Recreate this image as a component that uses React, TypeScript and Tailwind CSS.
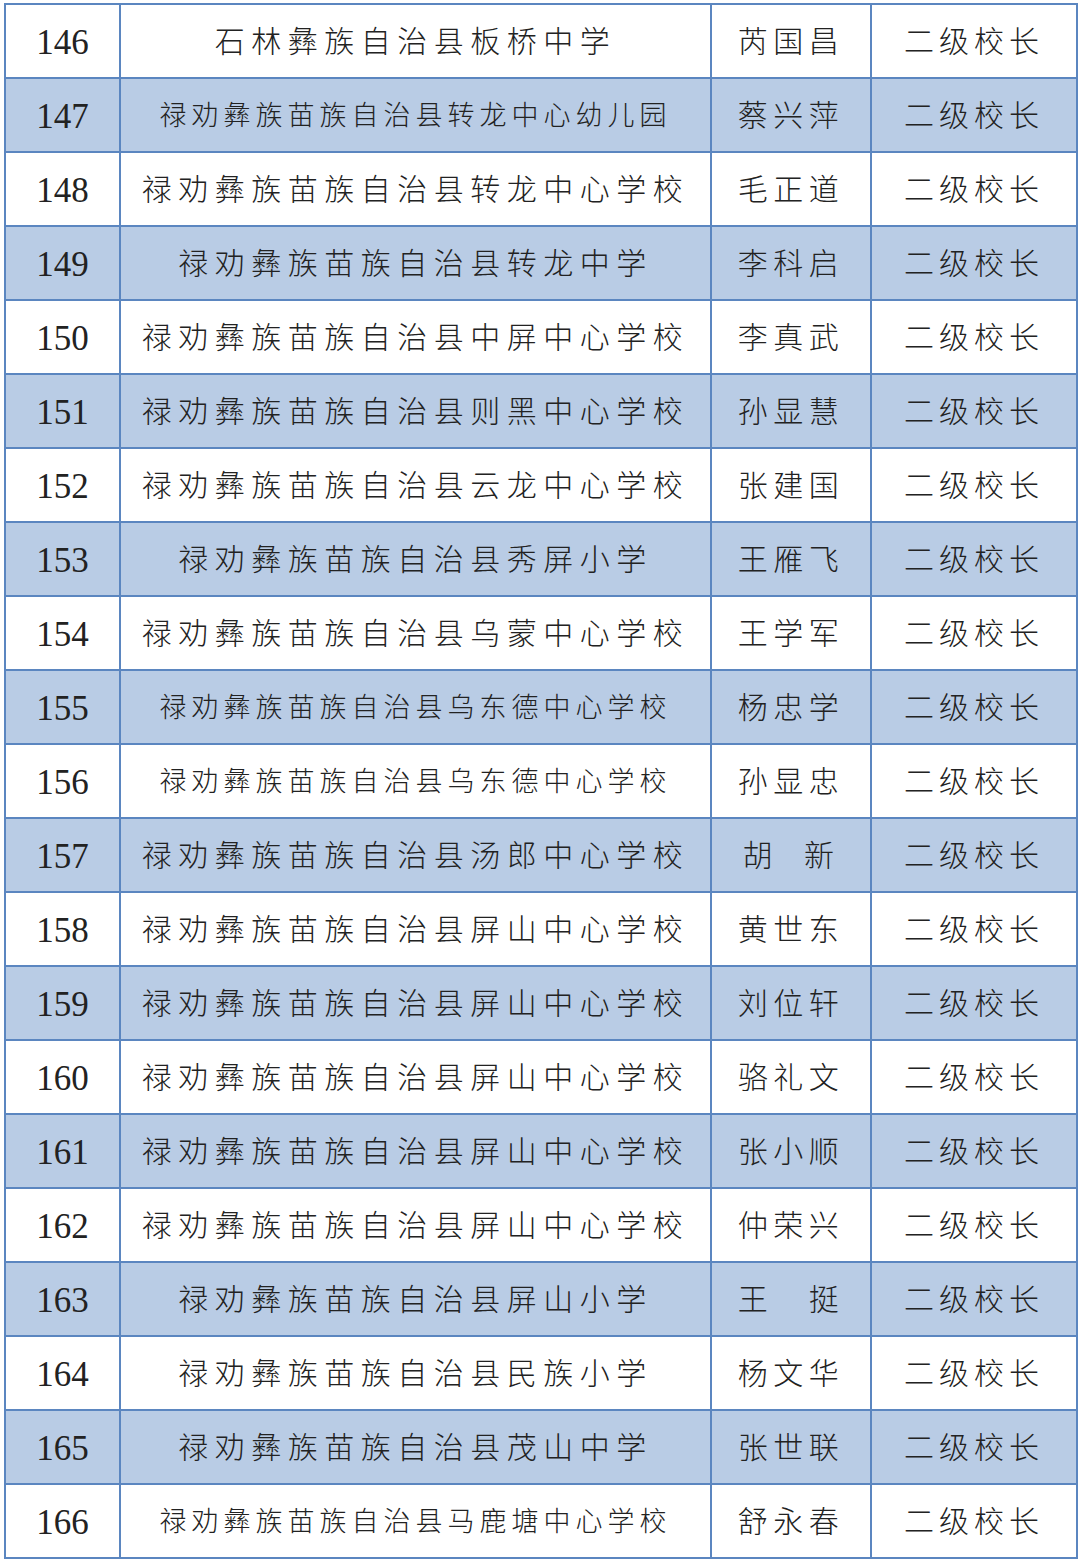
const rows: [number, string, string, boolean?][] = [
  [146, "石林彝族自治县板桥中学", "芮国昌"],
  [147, "禄劝彝族苗族自治县转龙中心幼儿园", "蔡兴萍", true],
  [148, "禄劝彝族苗族自治县转龙中心学校", "毛正道"],
  [149, "禄劝彝族苗族自治县转龙中学", "李科启"],
  [150, "禄劝彝族苗族自治县中屏中心学校", "李真武"],
  [151, "禄劝彝族苗族自治县则黑中心学校", "孙显慧"],
  [152, "禄劝彝族苗族自治县云龙中心学校", "张建国"],
  [153, "禄劝彝族苗族自治县秀屏小学", "王雁飞"],
  [154, "禄劝彝族苗族自治县乌蒙中心学校", "王学军"],
  [155, "禄劝彝族苗族自治县乌东德中心学校", "杨忠学", true],
  [156, "禄劝彝族苗族自治县乌东德中心学校", "孙显忠", true],
  [157, "禄劝彝族苗族自治县汤郎中心学校", "胡  新"],
  [158, "禄劝彝族苗族自治县屏山中心学校", "黄世东"],
  [159, "禄劝彝族苗族自治县屏山中心学校", "刘位轩"],
  [160, "禄劝彝族苗族自治县屏山中心学校", "骆礼文"],
  [161, "禄劝彝族苗族自治县屏山中心学校", "张小顺"],
  [162, "禄劝彝族苗族自治县屏山中心学校", "仲荣兴"],
  [163, "禄劝彝族苗族自治县屏山小学", "王　挺"],
  [164, "禄劝彝族苗族自治县民族小学", "杨文华"],
  [165, "禄劝彝族苗族自治县茂山中学", "张世联"],
  [166, "禄劝彝族苗族自治县马鹿塘中心学校", "舒永春", true],
];

const font = { fontFamily: '"Liberation Serif", "Noto Sans CJK SC", serif' };

export default function App() {
  return (
    <div className="min-h-[1562px] bg-white pl-[4px] pt-[3px]" style={font}>
      <table className="w-[1072px] table-fixed border-collapse border-2 border-[#5b86c0] font-light text-[#222222]">
        <colgroup>
          <col className="w-[115px]" />
          <col className="w-[591px]" />
          <col className="w-[160px]" />
          <col className="w-[206px]" />
        </colgroup>
        <tbody>
          {rows.map(([no, school, name, small], i) => (
            <tr key={no} className={`h-[74px] ${i % 2 === 1 ? "bg-[#b9cce5]" : "bg-white"}`}>
              <td className="border-2 border-[#5b86c0] pt-[2px] text-center text-[35px] font-normal leading-none">{no}</td>
              <td
                className={`border-2 border-[#5b86c0] pt-[2px] text-center leading-none ${
                  small ? "text-[27px] tracking-[5px]" : "text-[30px] tracking-[6.5px]"
                }`}
              >
                {school}
              </td>
              <td className="border-2 border-[#5b86c0] pt-[2px] whitespace-pre text-center text-[30px] leading-none tracking-[5.5px]">
                {name}
              </td>
              <td className="border-2 border-[#5b86c0] pt-[2px] text-center text-[30px] leading-none tracking-[5px]">
                二级校长
              </td>
            </tr>
          ))}
        </tbody>
      </table>
    </div>
  );
}
